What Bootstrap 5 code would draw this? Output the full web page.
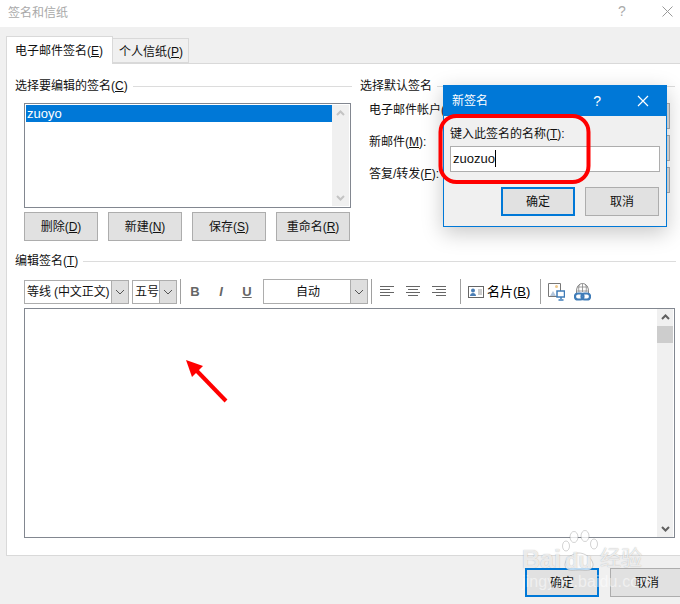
<!DOCTYPE html>
<html lang="zh"><head><meta charset="utf-8"><title>签名和信纸</title>
<link href="https://cdn.jsdelivr.net/npm/bootstrap@5.3.0/dist/css/bootstrap.min.css" rel="stylesheet">
<style>
html,body{margin:0;height:604px;overflow:hidden}
body{width:680px;background:#f0f0f0;font:12px/16px "Liberation Sans","Noto Sans CJK SC",sans-serif;color:#111;position:relative}
u{text-underline-offset:1px}
.titlebar{height:27px;background:#fff;padding:5px 0 0 8px;color:#a9a9a9;position:relative}
.winbtns{position:absolute;top:3px;left:618px;display:flex;align-items:center;gap:36px;color:#aaa;font-size:14px}
.tabstrip{height:36px;padding:9px 0 0 6px;align-items:flex-end;border:0}
.tabon,.taboff{border:1px solid #d9d9d9;box-sizing:border-box;display:block}
.tabon{width:107px;height:28px;background:#fff;border-bottom:0;padding:6px 0 0 8px;margin-bottom:-1px;position:relative;z-index:1;color:#111}
.taboff{width:77px;height:25px;margin-left:-1px;background:#f0f0f0;padding:5px 0 0 6px;color:#111}
.sheet{margin-left:6px;height:493px;background:#fff;border:1px solid #d9d9d9;border-right:0;padding:14px 0 0 8px}
.grouphead{display:flex;align-items:center;gap:5px;height:16px}
.grouphead::after{content:"";flex:1;height:1px;background:#dcdcdc}
.leftcol{width:337px}
.rightcol{width:315px;margin-left:8px}
.sigbox{margin:9px 0 0 9px;width:327px;height:105px;border:1px solid #828790;padding:1px;display:flex;background:#fff}
.siglist{flex:1;border-radius:0;display:block}
.sigitem{height:17px;padding:0 1px;border:0;border-radius:0;background:#0078d7;color:#fff;line-height:17px;font-size:13px}
.sbar{width:17px;background:#f0f0f0;display:flex;flex-direction:column;justify-content:space-between;align-items:center;flex:none}
.sbar svg{display:block;margin:5px 0}
.sigactions{margin:4px 0 0 9px;gap:10px}
.wbtn{width:74px;height:29px;padding:0;border:1px solid #adadad;border-radius:0;background:#e1e1e1;color:#111;font-size:12px;line-height:16px;--bs-btn-hover-bg:#e1e1e1}
.wbtn.dflt{border:2px solid #0078d7}
.defrow{display:flex;align-items:flex-start;height:26px;margin:0 0 6px 9px}
.defrow>span{flex:1;margin-top:-1px}
.wcombo{width:12px;height:26px;margin-right:5px;background:#e1e1e1;border:1px solid #adadad;border-left:0;display:flex;align-items:center;justify-content:flex-end;padding-right:3px}
.defrows{margin-top:9px}
.editsec{margin-top:12px;padding-right:4px}
.toolrow{margin:10px 0 0 9px;height:25px;display:flex;align-items:center}
.combo{height:24px;border:1px solid #adadad;display:flex;background:#fff;flex:none;white-space:nowrap;overflow:hidden}
.combotxt{flex:1;padding:3px 0 0 2px;overflow:hidden;font-size:12px;letter-spacing:-.1px}
.combobtn{width:17px;background:#dedede;border-left:1px solid #adadad;display:flex;align-items:center;justify-content:center;flex:none}
.fontbox{width:105px}.sizebox{width:45px;margin-left:3px}
.colorbox{width:105px;height:25px;margin-left:3px}
.colorbox .combotxt{text-align:center;padding-top:4px}
.tsep{width:1px;height:25px;background:#a0a0a0;flex:none;margin:0 0 0 3px}
.tsep.flat{margin:0}
.fmt{width:26px;text-align:center;font:bold 13px "Liberation Sans",sans-serif;color:#666;flex:none}
.fmt.first{margin-left:1px}
.fmt.ital{font-style:italic}
.alignset{display:flex;gap:12px;margin:0 14px 0 8px;flex:none}
.cardbtn{display:flex;align-items:center;gap:3px;margin:0 10px 0 7px;flex:none;color:#000;font-size:13px}
.pics{display:flex;gap:9px;margin-left:7px;flex:none}
.editor{margin:4px 0 0 9px;width:651px;height:230px;border:1px solid #828790;background:#fff;display:flex;justify-content:flex-end;padding-right:1px}
.edbar{width:16px;position:relative}
.thumb{position:absolute;left:0;right:0;top:17px;height:17px;background:#cdcdcd}
.footer{display:flex;gap:11px;padding:12px 0 0 525px}
.footer .wbtn{flex:none;height:29px}
.footer .grow{width:74px}
.subwin{position:absolute;left:443px;top:85px;width:224px;height:142px;background:#f0f0f0;border:1px solid #0078d7;box-shadow:0 6px 20px rgba(0,0,0,.22)}
.subhead{height:30px;background:#0078d7;color:#fff;display:flex;align-items:center;padding-left:8px;font-size:12px}
.subhead .hq{margin-left:auto;font-size:14px}
.subhead svg{margin:0 17px 0 36px}
.subbody{padding:10px 6px 0 6px}
.nameinput{display:block;width:210px;height:26px;margin-top:4px;border:1px solid #adadad;border-radius:0;padding:0 2px;font:13px "Liberation Sans",sans-serif;background:#fff;color:#111;line-height:24px;box-shadow:none}
.caret{display:inline-block;width:1px;height:17px;background:#000;vertical-align:-4px}
.subacts{display:flex;justify-content:flex-end;gap:10px;margin:15px 1px 0 0}
.marks{position:absolute;left:0;top:0;pointer-events:none}
.wm{position:absolute;color:rgba(255,255,255,.75);white-space:nowrap;pointer-events:none;text-shadow:0 0 1px rgba(110,110,110,.55)}
.wm1{left:522px;top:546px;font:bold 25px/26px "Liberation Sans",sans-serif}
.wm1b{left:565px;top:549px;font:bold 22px/24px "Liberation Sans",sans-serif}
.wm2{left:600px;top:547px;font-size:21px;line-height:22px}
.wm3{left:522px;top:572px;font:16px/20px "Liberation Sans",sans-serif;letter-spacing:.1px;color:rgba(255,255,255,.5);text-shadow:none}
</style></head>
<body>
<div class="titlebar">签名和信纸
  <div class="winbtns"><span>?</span><svg width="11" height="11" viewBox="0 0 11 11"><path d="M.5.5l10 10M10.500.5l-10 10" stroke="#999" fill="none"/></svg></div>
</div>
<ul class="nav tabstrip">
  <li class="nav-item"><a class="tabon text-decoration-none" href="#">电子邮件签名(<u>E</u>)</a></li>
  <li class="nav-item"><a class="taboff text-decoration-none" href="#">个人信纸(<u>P</u>)</a></li>
</ul>
<div class="sheet">
  <div class="d-flex">
    <div class="leftcol">
      <div class="grouphead"><span>选择要编辑的签名(<u>C</u>)</span></div>
      <div class="sigbox">
        <ul class="list-group siglist"><li class="list-group-item sigitem">zuoyo</li></ul>
        <div class="sbar"><svg width="9" height="6" viewBox="0 0 9 6"><path d="M1 5l3.500-3.500L8 5" stroke="#c4c4c4" stroke-width="2" fill="none"/></svg><svg width="9" height="6" viewBox="0 0 9 6"><path d="M1 1l3.500 3.500L8 1" stroke="#c4c4c4" stroke-width="2" fill="none"/></svg></div>
      </div>
      <div class="d-flex sigactions">
        <button class="btn wbtn">删除(<u>D</u>)</button>
        <button class="btn wbtn">新建(<u>N</u>)</button>
        <button class="btn wbtn">保存(<u>S</u>)</button>
        <button class="btn wbtn">重命名(<u>R</u>)</button>
      </div>
    </div>
    <div class="rightcol">
      <div class="grouphead"><span>选择默认签名</span></div>
      <div class="defrows">
        <div class="defrow"><span>电子邮件帐户(<u>A</u>):</span><div class="wcombo"><svg width="5" height="5" viewBox="0 0 5 5"><path d="M0 4l3-3" stroke="#777" fill="none"/></svg></div></div>
        <div class="defrow"><span>新邮件(<u>M</u>):</span><div class="wcombo"><svg width="5" height="5" viewBox="0 0 5 5"><path d="M0 4l3-3" stroke="#777" fill="none"/></svg></div></div>
        <div class="defrow"><span>答复/转发(<u>F</u>):</span><div class="wcombo"><svg width="5" height="5" viewBox="0 0 5 5"><path d="M0 4l3-3" stroke="#777" fill="none"/></svg></div></div>
      </div>
    </div>
  </div>
  <div class="editsec">
    <div class="grouphead"><span>编辑签名(<u>T</u>)</span></div>
  </div>
  <div class="toolrow">
    <div class="combo fontbox"><div class="combotxt">等线 (中文正文)</div><div class="combobtn"><svg width="10" height="6" viewBox="0 0 10 6"><path d="M1 1l4 4 4-4" stroke="#555" fill="none"/></svg></div></div>
    <div class="combo sizebox"><div class="combotxt">五号</div><div class="combobtn"><svg width="10" height="6" viewBox="0 0 10 6"><path d="M1 1l4 4 4-4" stroke="#555" fill="none"/></svg></div></div>
    <div class="tsep"></div>
    <div class="fmt first">B</div><div class="fmt ital">I</div><div class="fmt"><u>U</u></div>
    <div class="combo colorbox"><div class="combotxt">自动</div><div class="combobtn"><svg width="10" height="6" viewBox="0 0 10 6"><path d="M1 1l4 4 4-4" stroke="#555" fill="none"/></svg></div></div>
    <div class="tsep"></div>
    <div class="alignset">
      <svg width="14" height="11" viewBox="0 0 14 11"><path d="M0 .5h14M0 3.500h10M0 6.500h14M0 9.500h10" stroke="#666"/></svg>
      <svg width="14" height="11" viewBox="0 0 14 11"><path d="M0 .5h14M2 3.500h10M0 6.500h14M2 9.500h10" stroke="#666"/></svg>
      <svg width="14" height="11" viewBox="0 0 14 11"><path d="M0 .5h14M4 3.500h10M0 6.500h14M4 9.500h10" stroke="#666"/></svg>
    </div>
    <div class="tsep flat"></div>
    <div class="cardbtn"><svg width="16" height="12" viewBox="0 0 16 12"><rect x=".5" y=".5" width="15" height="11" fill="#fff" stroke="#666"/><circle cx="5" cy="4.500" r="2" fill="#4a7eb5"/><path d="M2 10c0-4 6-4 6 0z" fill="#4a7eb5"/><path d="M10 4h4M10 6h4M10 8h4" stroke="#999"/></svg><span>名片(<u>B</u>)</span></div>
    <div class="tsep flat"></div>
    <div class="pics">
      <svg width="17" height="18" viewBox="0 0 17 18"><path d="M9 13.500H.5V.5h12V8" fill="#fff" stroke="#777"/><path d="M2 13l3-5 3 5z" fill="#b5c7dc"/><circle cx="8.500" cy="3.500" r="1.500" fill="#efc88a"/><rect x="9" y="8" width="7.500" height="6" fill="#fff" stroke="#3f7cb8" stroke-width="1.500"/><path d="M13 14v2M10.500 17h5" stroke="#3f7cb8" stroke-width="1.500"/></svg>
      <svg width="17" height="18" viewBox="0 0 17 18"><path d="M2.500 10C2 4 5 .5 8.500.5S15 4 14.500 10" fill="none" stroke="#888"/><path d="M8.500 .5V9M3 4h11M2.500 8h12M5.500 1.500C4.500 4 4.500 6 5 9M11.500 1.500c1 2.500 1 4.500.5 7.500" stroke="#888" fill="none" stroke-width=".8"/><rect x="1" y="10.500" width="8.500" height="6" rx="3" fill="none" stroke="#3f7cb8" stroke-width="2.200"/><rect x="7.500" y="10.500" width="8.500" height="6" rx="3" fill="none" stroke="#3f7cb8" stroke-width="2.200"/></svg>
    </div>
  </div>
  <div class="editor">
    <div class="sbar edbar"><svg width="9" height="6" viewBox="0 0 9 6"><path d="M1 5l3.500-3.500L8 5" stroke="#606060" stroke-width="2" fill="none"/></svg><div class="thumb"></div><svg width="9" height="6" viewBox="0 0 9 6"><path d="M1 1l3.500 3.500L8 1" stroke="#606060" stroke-width="2" fill="none"/></svg></div>
  </div>
</div>
<div class="footer">
  <button class="btn wbtn dflt">确定</button>
  <button class="btn wbtn grow">取消</button>
</div>

<div class="subwin">
  <div class="subhead">新签名<span class="hq">?</span><svg width="12" height="12" viewBox="0 0 12 12"><path d="M1 1l10 10M11 1L1 11" stroke="#fff" stroke-width="1.200" fill="none"/></svg></div>
  <div class="subbody">
    <div>键入此签名的名称(<u>T</u>):</div>
    <div class="nameinput">zuozuo<span class="caret"></span></div>
    <div class="subacts">
      <button class="btn wbtn dflt">确定</button>
      <button class="btn wbtn">取消</button>
    </div>
  </div>
</div>

<svg class="marks" width="680" height="604" viewBox="0 0 680 604">
  <rect x="440.500" y="116" width="148" height="66" rx="16" fill="none" stroke="#f00" stroke-width="4"/>
  <path d="M226 401L196 370" stroke="#f00" stroke-width="4" fill="none"/>
  <path d="M186 360l17 6-11 11z" fill="#f00"/>
  <g fill="rgba(255,255,255,.75)" stroke="rgba(110,110,110,.3)">
    <ellipse cx="566" cy="546" rx="3.500" ry="5"/><ellipse cx="574" cy="537" rx="4" ry="5.500"/><ellipse cx="585" cy="536" rx="4" ry="5.500"/><ellipse cx="594" cy="544" rx="3.500" ry="5"/>
    <path d="M566 568c-4-6 5-15 13-15s17 9 13 15c-3 4-9 2-13 2s-10 2-13-2z"/>
  </g>
</svg>
<div class="wm wm1">Bai</div>
<div class="wm wm1b">du</div>
<div class="wm wm2">经验</div>
<div class="wm wm3">jingyan.baidu.com</div>
</body></html>
